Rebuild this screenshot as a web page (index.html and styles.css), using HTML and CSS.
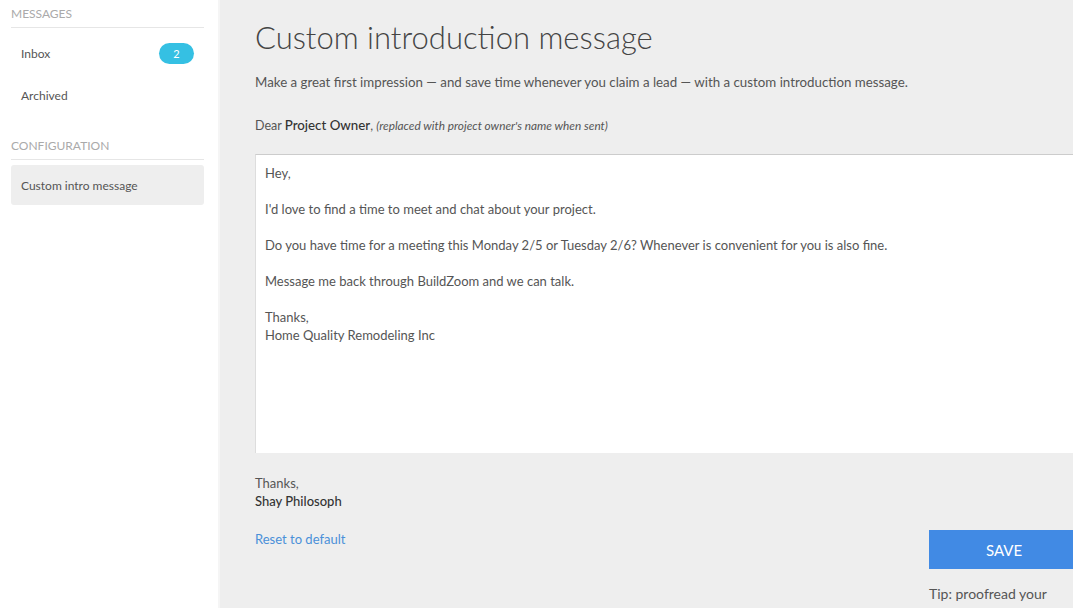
FILE: index.html
```html
<!DOCTYPE html>
<html lang="en">
<head>
    <meta charset="UTF-8">
    <meta name="viewport" content="width=device-width, initial-scale=1.0">
    <title>Custom introduction message</title>
    <link rel="stylesheet" href="styles.css">
</head>
<body>
    <div class="page">
        <aside class="sidebar">
            <div class="side-title">Messages</div>
            <a href="#" class="side-item">Inbox <span class="badge">2</span></a>
            <a href="#" class="side-item">Archived</a>

            <div class="side-title side-title-second">Configuration</div>
            <a href="#" class="side-item active">Custom intro message</a>
        </aside>

        <main class="content">
            <h1>Custom introduction message</h1>
            <p class="intro">Make a great first impression — and save time whenever you claim a lead — with a custom introduction message.</p>

            <p class="dear">Dear <strong>Project Owner</strong>, <em>(replaced with project owner's name when sent)</em></p>

            <div class="editor-row">
                <div class="message-box">
                    <p>Hey,</p>
                    <p>I'd love to find a time to meet and chat about your project.</p>
                    <p>Do you have time for a meeting this Monday 2/5 or Tuesday 2/6? Whenever is convenient for you is also fine.</p>
                    <p>Message me back through BuildZoom and we can talk.</p>
                    <p>Thanks,<br>Home Quality Remodeling Inc</p>
                </div>

                <p class="signature">Thanks,<br><strong>Shay Philosoph</strong></p>
            </div>

            <div class="actions">
                <a href="#" class="reset">Reset to default</a>
                <div class="save-col">
                    <button type="button" class="btn-save">SAVE</button>
                    <p class="tip">Tip: proofread your message for spelling</p>
                </div>
            </div>
        </main>
    </div>
</body>
</html>
```

FILE: styles.css
```css
html, body {
    margin: 0;
    height: 100%;
    overflow: hidden;
}
body {
    font-family: Lato, "Open Sans", sans-serif;
    background-color: #eeeeee;
    color: #555;
    font-size: 13px;
}
.page {
    display: flex;
    min-height: 100%;
    width: 1300px;
}
.sidebar {
    width: 193px;
    flex-shrink: 0;
    background-color: #fff;
    padding: 6px 14px 0 11px;
    border-right: 2px solid #f5f5f5;
}
.side-title {
    text-transform: uppercase;
    color: #aaa;
    font-size: 12px;
    padding-bottom: 6px;
    border-bottom: 1px solid #e6e6e6;
    margin-bottom: 4px;
}
.side-title-second {
    margin-top: 22px;
    margin-bottom: 5px;
}
.side-item {
    display: flex;
    align-items: center;
    justify-content: space-between;
    height: 42px;
    padding: 0 10px;
    color: #555;
    text-decoration: none;
    font-size: 12px;
    border-radius: 3px;
}
.side-item.active {
    background-color: #eeeeee;
    height: 40px;
}
.badge {
    background-color: #35c0e3;
    color: #fff;
    font-size: 11px;
    width: 35px;
    height: 21px;
    line-height: 21px;
    text-align: center;
    border-radius: 11px;
}
.content {
    padding: 0 0 0 35px;
    flex: 1;
}
h1 {
    font-weight: 300;
    font-size: 31px;
    color: #444;
    margin: 18px 0 0;
}
.intro {
    margin: 17px 0 0;
    line-height: 18px;
    font-size: 13.3px;
}
.dear {
    margin: 26px 0 0;
    font-size: 12.5px;
}
.dear strong {
    font-weight: 500;
    color: #333;
    font-size: 13.3px;
}
.dear em {
    font-size: 11.8px;
}
.editor-row {
    margin-top: 21px;
}
.message-box {
    width: 900px;
    height: 280px;
    background-color: #fff;
    border-top: 1px solid #ccc;
    border-left: 1px solid #ddd;
    padding: 9px;
    font-size: 13px;
    line-height: 18px;
}
.message-box p {
    margin: 0 0 18px;
}
.signature {
    margin: 21px 0 0;
    line-height: 18px;
}
.signature strong {
    font-weight: 500;
    color: #333;
}
.actions {
    display: flex;
    align-items: flex-start;
    margin-top: 21px;
}
.reset {
    color: #4a90d9;
    text-decoration: none;
    width: 674px;
}
.save-col {
    width: 150px;
    margin-top: -1px;
}
.btn-save {
    width: 100%;
    height: 39px;
    background-color: #418ae4;
    color: #fff;
    border: none;
    font-family: inherit;
    font-size: 15px;
    cursor: pointer;
}
.tip {
    margin: 15px 0 0;
    width: 125px;
    font-size: 14px;
    line-height: 20px;
}
```
